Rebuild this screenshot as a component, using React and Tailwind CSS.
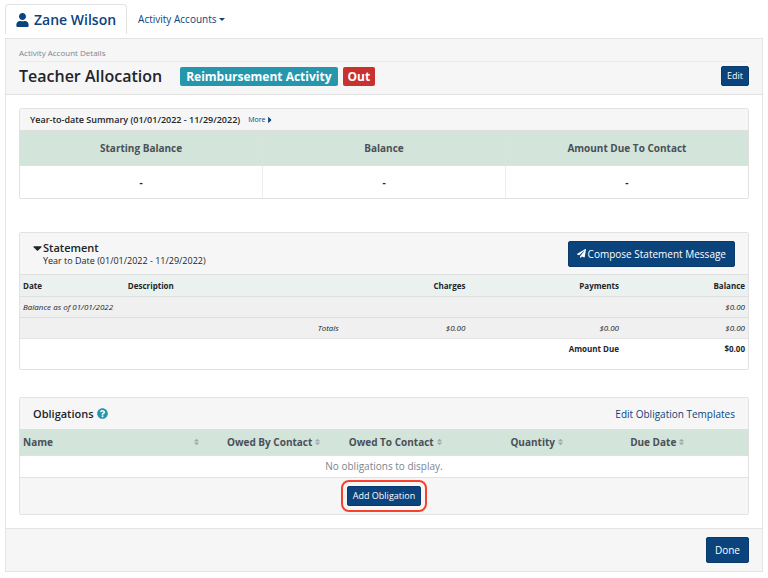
import React from "react";
import { FaUser, FaPaperPlane, FaCaretDown, FaCaretRight, FaSort, FaQuestionCircle } from "react-icons/fa";

const primary =
  "inline-flex items-center justify-center rounded-xs border border-[#0a3a6c] bg-[#0b437c] text-white";

function SortHeader({ label, align }) {
  return (
    <th scope="col" className="h-[25px] border-b border-[#dee2e6] px-[3px] font-bold">
      <button type="button" className={"flex w-full items-center gap-[3px] " + align}>
        {label}
        <FaSort className="h-2 w-[5px] text-[#9faab0]" />
      </button>
    </th>
  );
}

function Card({ className = "", children }) {
  return (
    <section className={"rounded-xs border border-[#e2e2e2] bg-white " + className}>{children}</section>
  );
}

export default function App() {
  return (
    <div className="bg-white px-[5px] pt-1 pb-[5px] font-['Open_Sans','Noto_Sans',sans-serif] text-[10px] leading-4 text-[#212529]">
      <nav className="mb-1 flex h-[30px] items-stretch">
        <a href="#contact" className="flex items-center gap-[5px] rounded-t-sm border border-b-0 border-[#e2e2e2] px-[10px] text-[14px] font-semibold text-[#0b437c]">
          <FaUser className="h-[14px] w-[13px]" />
          Zane Wilson
        </a>
        <button type="button" className="flex items-center gap-[2px] px-[11px] text-[#0b437c]">
          Activity Accounts
          <svg viewBox="0 0 6 3" className="h-[3px] w-[6px]" fill="currentColor" aria-hidden="true">
            <path d="M0 0h6L3 3z" />
          </svg>
        </button>
      </nav>

      <main className="border border-[#e4e4e4]">
        <header className="border-b border-[#e2e2e2] bg-[#f6f6f6] px-[13px] pt-[6px] pb-2">
          <p className="border-b border-[#ebebeb] text-[8px] text-[#7c858d]">Activity Account Details</p>
          <div className="flex items-center pt-1">
            <h1 className="mr-[18px] text-[16px] leading-5 font-semibold">Teacher Allocation</h1>
            <span className="mr-[5px] rounded-xs bg-[#2497ad] px-[6px] text-[12px] leading-[19px] font-bold text-white">Reimbursement Activity</span>
            <span className="rounded-xs bg-[#c93030] px-[5px] text-[12px] leading-[19px] font-bold text-white">Out</span>
            <button type="button" className={primary + " ml-auto h-5 px-[5px] text-[9px]"}>Edit</button>
          </div>
        </header>

        <div className="p-[13px]">
          <Card className="mb-[33px]">
            <div className="flex h-[22px] items-center gap-2 border-b border-[#dedede] bg-[#f6f6f6] px-[10px]">
              <h2 className="text-[9px] font-semibold">Year-to-date Summary (01/01/2022 - 11/29/2022)</h2>
              <a href="#more" className="flex items-center gap-[2px] text-[7px] text-[#0b437c]">
                More
                <FaCaretRight className="h-[10px] w-[6px]" />
              </a>
            </div>
            <table className="w-full table-fixed text-center">
              <thead className="bg-[#d3e4da] text-[#495057]">
                <tr>
                  <th scope="col" className="h-[34px] border-r border-b border-[#dbe3df] font-bold">Starting Balance</th>
                  <th scope="col" className="border-r border-b border-[#dbe3df] font-bold">Balance</th>
                  <th scope="col" className="border-b border-[#dbe3df] font-bold">Amount Due To Contact</th>
                </tr>
              </thead>
              <tbody className="font-bold">
                <tr>
                  <td className="h-[33px] border-r border-[#ececec]">-</td>
                  <td className="border-r border-[#ececec]">-</td>
                  <td>-</td>
                </tr>
              </tbody>
            </table>
          </Card>

          <Card className="mb-[27px]">
            <div className="flex h-[42px] items-center justify-between border-b border-[#dde0de] bg-[#f6f6f6] px-[13px]">
              <div className="flex">
                <FaCaretDown className="mr-px h-[14px] w-[9px]" />
                <div>
                  <h2 className="text-[11px] leading-[14px] font-semibold">Statement</h2>
                  <p className="text-[9px] leading-3">Year to Date (01/01/2022 - 11/29/2022)</p>
                </div>
              </div>
              <button type="button" className={primary + " h-[26px] gap-[2px] px-2"}>
                <FaPaperPlane className="h-[9px] w-[9px]" />
                Compose Statement Message
              </button>
            </div>
            <table className="mb-[10px] w-full table-fixed text-[8px] leading-[11px]">
              <colgroup>
                <col className="w-[14.4%]" />
                <col className="w-[29.8%]" />
                <col className="w-[17.4%]" />
                <col className="w-[21.1%]" />
                <col className="w-[17.3%]" />
              </colgroup>
              <thead className="bg-[#ebf1ee]">
                <tr className="h-[21px] border-b border-[#dee0df]">
                  <th scope="col" className="px-[3px] text-left font-bold">Date</th>
                  <th scope="col" className="px-[3px] text-left font-bold">Description</th>
                  <th scope="col" className="px-[3px] text-right font-bold">Charges</th>
                  <th scope="col" className="px-[3px] text-right font-bold">Payments</th>
                  <th scope="col" className="px-[3px] text-right font-bold">Balance</th>
                </tr>
              </thead>
              <tbody>
                <tr className="h-[21px] border-b border-[#dedede] bg-[#f0f0f0] italic">
                  <td colSpan={4} className="px-[3px]">Balance as of 01/01/2022</td>
                  <td className="px-[3px] text-right">$0.00</td>
                </tr>
                <tr className="h-[21px] border-b border-[#e4e4e4] bg-[#f0f0f0] text-right italic">
                  <td colSpan={2} className="px-[3px]">Totals</td>
                  <td className="px-[3px]">$0.00</td>
                  <td className="px-[3px]">$0.00</td>
                  <td className="px-[3px]">$0.00</td>
                </tr>
                <tr className="h-[21px] text-right font-bold">
                  <td colSpan={4} className="px-[3px]">Amount Due</td>
                  <td className="px-[3px]">$0.00</td>
                </tr>
              </tbody>
            </table>
          </Card>

          <Card>
            <div className="flex h-[32px] items-center justify-between border-b border-[#dcdfdd] bg-[#f6f6f6] px-[13px]">
              <h2 className="flex items-center gap-[3px] text-[11px] font-semibold">
                Obligations
                <FaQuestionCircle className="h-[11px] w-[11px] text-[#2497ad]" />
              </h2>
              <a href="#templates" className="text-[#0b437c]">Edit Obligation Templates</a>
            </div>
            <table className="w-full table-fixed">
              <colgroup>
                <col className="w-3/12" />
                <col className="w-2/12" />
                <col className="w-2/12" />
                <col className="w-2/12" />
                <col className="w-2/12" />
                <col className="w-1/12" />
              </colgroup>
              <thead className="bg-[#d3e4da] text-[#495057]">
                <tr>
                  <SortHeader label="Name" align="justify-between" />
                  <SortHeader label="Owed By Contact" align="justify-end" />
                  <SortHeader label="Owed To Contact" align="justify-end" />
                  <SortHeader label="Quantity" align="justify-end" />
                  <SortHeader label="Due Date" align="justify-end" />
                  <td className="border-b border-[#dee2e6]" />
                </tr>
              </thead>
              <tbody>
                <tr>
                  <td colSpan={6} className="h-[22px] text-center text-[#7c858d]">No obligations to display.</td>
                </tr>
              </tbody>
            </table>
            <div className="flex h-[37px] items-center justify-center border-t border-[#e2e2e2] bg-[#f6f6f6]">
              <div className="rounded-lg border-2 border-[#f5412d] p-1">
                <button type="button" className={primary + " h-5 px-[5px] text-[9px]"}>Add Obligation</button>
              </div>
            </div>
          </Card>
        </div>

        <footer className="flex h-[43px] items-center justify-end border-t border-[#e4e4e4] bg-[#f6f6f6] px-[13px]">
          <button type="button" className={primary + " h-[26px] px-2"}>Done</button>
        </footer>
      </main>
    </div>
  );
}
